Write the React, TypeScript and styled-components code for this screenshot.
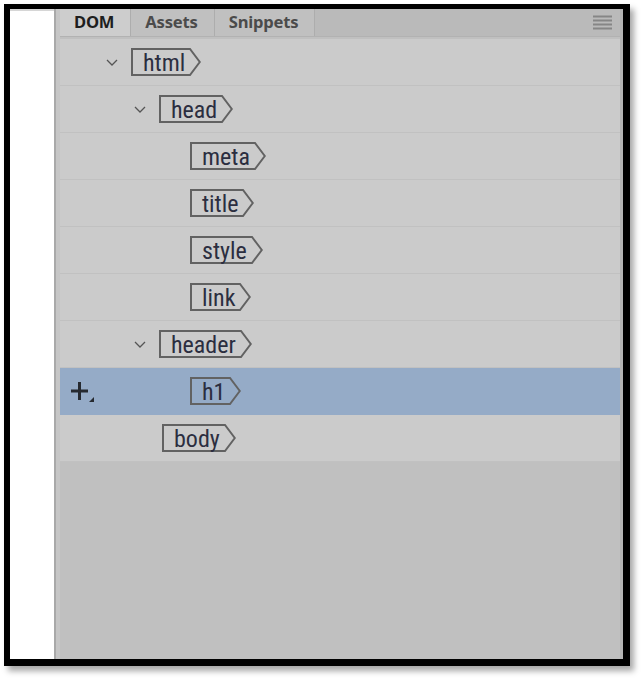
import React from "react";
import styled, { createGlobalStyle } from "styled-components";

const Global = createGlobalStyle`
  html, body { margin: 0; padding: 0; background: #ffffff; }
  body { width: 643px; height: 679px; overflow: hidden; }
`;

const Frame = styled.div`
  box-sizing: border-box;
  margin: 4px 0 0 4px;
  width: 626px;
  height: 662px;
  border-style: solid;
  border-color: #000;
  border-width: 5px 7px 7px 6px;
  box-shadow: 4px 5px 6px rgba(0, 0, 0, 0.35);
  display: flex;
  background: #ffffff;
`;

const WhiteStrip = styled.div`
  width: 44px;
  background: #ffffff;
  border-top: 2px solid #d6d6d6;
  box-sizing: border-box;
`;

const Divider = styled.div`
  width: 6px;
  display: flex;
  & > span:first-child { width: 2px; background: #a9a9a9; }
  & > span:last-child { flex: 1; background: #c6c6c6; }
`;

const Panel = styled.div`
  flex: 1;
  display: flex;
  flex-direction: column;
  background: #c0c0c0;
  min-width: 0;
`;

const RightEdge = styled.div`
  width: 3px;
  background: #b4b4b4;
`;

const TabBar = styled.div`
  height: 28px;
  display: flex;
  align-items: stretch;
  background: #bababa;
  border-bottom: 1px solid #b2b2b2;
  box-sizing: border-box;
`;

const Tab = styled.div<{ $active?: boolean }>`
  display: flex;
  align-items: center;
  padding: 0 16px 1px 14px;
  font: bold 16.6px/1 "Noto Sans", "Open Sans", sans-serif;
  color: ${(p) => (p.$active ? "#1e1e1e" : "#4b4b4b")};
  background: ${(p) => (p.$active ? "#cdcdcd" : "#c0c0c0")};
  border-right: 1px solid #adadad;
  letter-spacing: -0.2px;
`;

const TabSpacer = styled.div`
  flex: 1;
`;

const MenuButton = styled.div`
  width: 19px;
  display: flex;
  align-items: center;
  margin-right: 8px;
`;

const List = styled.div`
  padding-top: 2px;
  display: flex;
  flex-direction: column;
`;

const Row = styled.div<{ $level: number; $selected?: boolean }>`
  position: relative;
  height: 47px;
  box-sizing: border-box;
  display: flex;
  align-items: center;
  padding-left: ${(p) => 46 + (p.$level - 1) * 28}px;
  background: ${(p) => (p.$selected ? "#95abc7" : "#cbcbcb")};
  border-bottom: 1px solid ${(p) => (p.$selected ? "#95abc7" : "#c1c1c1")};
`;

const ToggleSlot = styled.div<{ $expandable?: boolean }>`
  width: ${(p) => (p.$expandable ? 25 : 28)}px;
  flex: none;
  display: flex;
  align-items: center;
  padding-top: 1px;
`;

const AddButton = styled.div`
  position: absolute;
  left: 11px;
  top: 13px;
  width: 24px;
  height: 24px;
`;

const Tag = styled.span`
  display: inline-flex;
  align-items: stretch;
  height: 28px;
  margin-top: -1px;
`;

const TagBody = styled.span`
  box-sizing: border-box;
  height: 28px;
  border: 2px solid #626262;
  border-right: none;
  padding: 1px 3px 0 10px;
  font: 24px/24px "Liberation Sans Narrow", "Roboto Condensed", "Liberation Sans", sans-serif;
  color: #2b2e40;
  white-space: nowrap;
`;

const Chevron = () => (
  <svg width="12" height="7" viewBox="0 0 12 7">
    <polyline points="1,1 6,6 11,1" fill="none" stroke="#555" strokeWidth="1.3" />
  </svg>
);

const TagTip = () => (
  <svg width="13" height="28" viewBox="0 0 13 28">
    <path d="M0 1 L2 1 L11.8 14 L2 27 L0 27" fill="none" stroke="#626262" strokeWidth="2" strokeLinejoin="miter" />
  </svg>
);

const MenuIcon = () => (
  <svg width="19" height="15" viewBox="0 0 19 15">
    <rect x="0" y="0.5" width="19" height="2" fill="#868686" />
    <rect x="0" y="4.5" width="19" height="2" fill="#868686" />
    <rect x="0" y="8.5" width="19" height="2" fill="#868686" />
    <rect x="0" y="12.5" width="19" height="2" fill="#868686" />
  </svg>
);

const PlusIcon = () => (
  <svg width="24" height="24" viewBox="0 0 24 24">
    <rect x="0" y="8.5" width="17" height="3" fill="#262a30" />
    <rect x="7" y="1" width="3" height="18" fill="#262a30" />
    <polygon points="23,16 23,21 18,21" fill="#262a30" />
  </svg>
);

type Node = { name: string; level: number; expandable?: boolean; selected?: boolean };

const nodes: Node[] = [
  { name: "html", level: 1, expandable: true },
  { name: "head", level: 2, expandable: true },
  { name: "meta", level: 3 },
  { name: "title", level: 3 },
  { name: "style", level: 3 },
  { name: "link", level: 3 },
  { name: "header", level: 2, expandable: true },
  { name: "h1", level: 3, selected: true },
  { name: "body", level: 2 },
];

export default function App() {
  return (
    <>
      <Global />
      <Frame>
        <WhiteStrip />
        <Divider>
          <span />
          <span />
        </Divider>
        <Panel>
          <TabBar>
            <Tab $active>DOM</Tab>
            <Tab>Assets</Tab>
            <Tab>Snippets</Tab>
            <TabSpacer />
            <MenuButton>
              <MenuIcon />
            </MenuButton>
          </TabBar>
          <List>
            {nodes.map((n) => (
              <Row key={n.name} $level={n.level} $selected={n.selected}>
                {n.selected && (
                  <AddButton>
                    <PlusIcon />
                  </AddButton>
                )}
                <ToggleSlot $expandable={n.expandable}>{n.expandable && <Chevron />}</ToggleSlot>
                <Tag>
                  <TagBody>{n.name}</TagBody>
                  <TagTip />
                </Tag>
              </Row>
            ))}
          </List>
        </Panel>
        <RightEdge />
      </Frame>
    </>
  );
}
